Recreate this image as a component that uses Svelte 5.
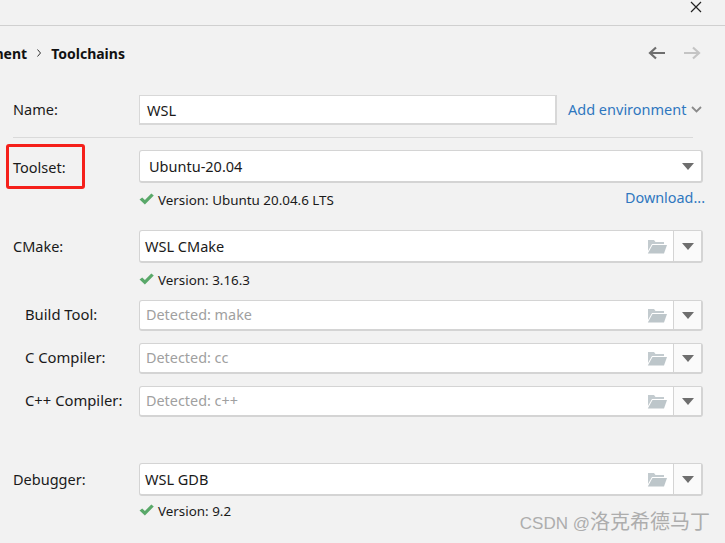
<script>
  const tools = [
    { label: "Build Tool:", hint: "Detected: make" },
    { label: "C Compiler:", hint: "Detected: cc" },
    { label: "C++ Compiler:", hint: "Detected: c++" }
  ];
</script>

{#snippet check()}
  <svg class="check" width="15" height="12" viewBox="0 0 14 12" preserveAspectRatio="none"><path d="M0.5 6.5 L3 4.5 L5.5 7 L11.5 0.5 L13.8 2.5 L5.5 11.5 Z" fill="#59a869" /></svg>
{/snippet}

{#snippet folder()}
  <svg class="folder" width="20" height="15" viewBox="0 0 20 15">
    <path d="M1 1 H7 L8.5 3 H17 V5 H5 L1 12 Z" fill="#c3cbcf" />
    <path d="M5.5 6 H20 L17 14.5 H0.8 Z" fill="#bdc6ca" />
  </svg>
{/snippet}

{#snippet arrow()}
  <svg class="arrow" width="12" height="7" viewBox="0 0 12 7"><path d="M0 0 H12 L6 7 Z" fill="#6e6e6e" /></svg>
{/snippet}

{#snippet browse(text, muted, h)}
  <div class="browse" class:tall={h}>
    <div class="browse-text" class:muted><span class="value">{text}</span>{@render folder()}</div>
    <div class="browse-btn">{@render arrow()}</div>
  </div>
{/snippet}

<div class="page">
  <header class="titlebar">
    <svg width="12" height="12" viewBox="0 0 12 12"><path d="M1 1 L11 11 M11 1 L1 11" stroke="#222" stroke-width="1.2" /></svg>
  </header>

  <div class="crumbs">
    <span class="crumb">Environment</span>
    <svg width="4" height="8" viewBox="0 0 4 8"><path d="M0.5 0.5 L3.5 4 L0.5 7.5" fill="none" stroke="#333" stroke-width="1" /></svg>
    <span class="crumb">Toolchains</span>
    <div class="nav">
      <svg width="18" height="14" viewBox="0 0 18 14"><path d="M17 7 H3 M8 1.5 L2 7 L8 12.5" fill="none" stroke="#6e6e6e" stroke-width="2.2" /></svg>
      <svg width="18" height="14" viewBox="0 0 18 14"><path d="M1 7 H15 M10 1.5 L16 7 L10 12.5" fill="none" stroke="#c4c4c4" stroke-width="2.2" /></svg>
    </div>
  </div>

  <div class="row name-row">
    <span class="label up">Name:</span>
    <div class="input">WSL</div>
    <a class="link add">Add environment
      <svg width="11" height="7" viewBox="0 0 11 7"><path d="M1 1 L5.5 5.5 L10 1" fill="none" stroke="#8a8a8a" stroke-width="1.8" /></svg>
    </a>
  </div>

  <hr class="divider" />

  <div class="row toolset-row">
    <span class="label">Toolset:</span>
    <div class="combo">Ubuntu-20.04{@render arrow()}</div>
  </div>
  <div class="status first">
    <span class="status-text">{@render check()}Version: Ubuntu 20.04.6 LTS</span>
    <a class="link">Download...</a>
  </div>

  <div class="row cmake-row">
    <span class="label up">CMake:</span>
    {@render browse("WSL CMake", false, true)}
  </div>
  <div class="status"><span class="status-text">{@render check()}Version: 3.16.3</span></div>

  <div class="tools">
    {#each tools as t}
      <div class="row">
        <span class="label sub">{t.label}</span>
        {@render browse(t.hint, true, false)}
      </div>
    {/each}
  </div>

  <div class="row debugger-row">
    <span class="label up">Debugger:</span>
    {@render browse("WSL GDB", false, true)}
  </div>
  <div class="status last"><span class="status-text">{@render check()}Version: 9.2</span></div>

  <div class="highlight"></div>
  <div class="watermark">CSDN @<span class="cjk">洛克希德马丁</span></div>
</div>

<style>
  :global(body) {
    margin: 0;
    background: #f2f2f2;
  }

  .page {
    position: relative;
    width: 725px;
    height: 543px;
    overflow: hidden;
    background: #f2f2f2;
    color: #1a1a1a;
    font-family: "Noto Sans", "Open Sans", sans-serif;
    font-size: 14.5px;
  }

  .titlebar {
    height: 24px;
    border-bottom: 1px solid #d0d0d0;
    display: flex;
    justify-content: flex-end;
    padding: 1px 23px 0 0;
  }

  .crumbs {
    display: flex;
    align-items: center;
    gap: 10px;
    height: 20px;
    margin: 17px 24px 0 -63px;
  }

  .crumb {
    font-size: 14px;
    font-weight: 700;
    color: #111;
  }

  .nav {
    margin-left: auto;
    display: flex;
    gap: 17px;
  }

  .row {
    display: flex;
    align-items: center;
  }

  .label {
    width: 139px;
    flex: none;
    padding-left: 13px;
    box-sizing: border-box;
  }

  .label.up {
    padding-bottom: 2px;
  }

  .label.sub {
    padding-left: 25px;
    padding-bottom: 4px;
    font-size: 14.8px;
  }

  .name-row {
    margin-top: 32px;
  }

  .input {
    width: 418px;
    height: 30px;
    line-height: 28px;
    box-sizing: border-box;
    background: #fff;
    border: 1px solid #d8d8d8;
    border-width: 1px 2px 2px 1px;
    padding-left: 7px;
  }

  .link {
    color: #2f77bf;
  }

  .add {
    margin-left: 11px;
    margin-bottom: 2px;
    display: flex;
    align-items: center;
    gap: 5px;
  }

  .divider {
    border: 0;
    border-top: 1px solid #dadada;
    margin: 12px 32px 0 13px;
  }

  .toolset-row {
    margin-top: 12px;
  }

  .combo {
    width: 564px;
    height: 33px;
    box-sizing: border-box;
    background: #fff;
    border: 1px solid #d4d4d4;
    border-width: 1px 2px 2px 1px;
    border-radius: 3px;
    padding: 0 7px 0 9px;
    display: flex;
    align-items: center;
    justify-content: space-between;
  }

  .status {
    display: flex;
    justify-content: space-between;
    align-items: center;
    height: 20px;
    margin: 7px 20px 0 139px;
    font-size: 13.4px;
  }

  .status.last {
    margin-top: 5px;
  }

  .status-text {
    display: flex;
    align-items: center;
    gap: 4px;
  }

  .status .link {
    font-size: 14.4px;
    margin-top: -5px;
  }

  .check {
    flex: none;
    margin-top: -3px;
  }

  .cmake-row {
    margin-top: 20px;
  }

  .browse {
    width: 564px;
    height: 31px;
    box-sizing: border-box;
    display: flex;
    background: #fff;
    border: 1px solid #d4d4d4;
    border-width: 1px 2px 2px 1px;
    border-radius: 3px;
  }

  .browse.tall {
    height: 33px;
  }

  .browse-text {
    flex: 1;
    display: flex;
    align-items: center;
    justify-content: space-between;
    padding: 0 6px 0 6px;
    border-right: 1px solid #d4d4d4;
  }

  .browse.tall .browse-text {
    padding-left: 5px;
  }

  .muted {
    color: #a0a0a0;
    font-size: 14.4px;
  }

  .muted .value {
    margin-top: -2px;
  }

  .browse-btn {
    width: 27px;
    background: #fafafa;
    display: flex;
    align-items: center;
    justify-content: center;
  }

  .tools {
    margin-top: 10px;
    display: flex;
    flex-direction: column;
    gap: 12px;
  }

  .debugger-row {
    margin-top: 46px;
  }

  .highlight {
    position: absolute;
    left: 6px;
    top: 144px;
    width: 79px;
    height: 45px;
    box-sizing: border-box;
    border: 3px solid #f5201b;
    border-radius: 3px;
  }

  .watermark {
    position: absolute;
    right: 15px;
    bottom: 8px;
    font-size: 17px;
    color: #adadad;
    font-family: "Liberation Sans", "Noto Sans CJK SC", sans-serif;
  }

  .cjk {
    font-size: 20px;
  }
</style>
